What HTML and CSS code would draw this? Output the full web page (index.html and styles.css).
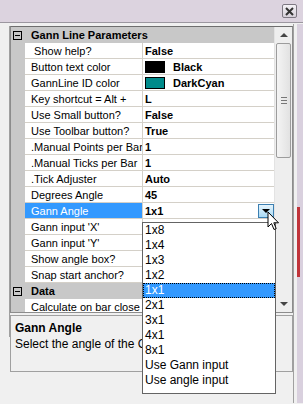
FILE: index.html
```html
<!DOCTYPE html>
<html lang="en">

<head>
    <meta charset="UTF-8">
    <title>Gann Line Parameters</title>
    <link rel="stylesheet" href="styles.css">
</head>

<body>

    <div class="titlebar">
        <div class="close-btn">
            <svg width="9" height="9" viewBox="0 0 9 9"><path d="M1 1 L8 8 M8 1 L1 8" stroke="#333" stroke-width="2"/></svg>
        </div>
    </div>

    <div class="main">
        <div class="left-edge"></div>

        <div class="panel">
            <div class="grid">
                <div class="rows">
                    <div class="category">
                        <span class="toggle"></span>
                        <span class="cat-name">Gann Line Parameters</span>
                    </div>
                    <div class="row"><span class="gutter"></span><span class="name">&nbsp;Show help?</span><span class="value">False</span></div>
                    <div class="row"><span class="gutter"></span><span class="name">Button text color</span><span class="value"><i class="swatch black"></i>Black</span></div>
                    <div class="row"><span class="gutter"></span><span class="name">GannLine ID color</span><span class="value"><i class="swatch cyan"></i>DarkCyan</span></div>
                    <div class="row"><span class="gutter"></span><span class="name">Key shortcut = Alt +</span><span class="value">L</span></div>
                    <div class="row"><span class="gutter"></span><span class="name">Use Small button?</span><span class="value">False</span></div>
                    <div class="row"><span class="gutter"></span><span class="name">Use Toolbar button?</span><span class="value">True</span></div>
                    <div class="row"><span class="gutter"></span><span class="name">.Manual Points per Bar</span><span class="value">1</span></div>
                    <div class="row"><span class="gutter"></span><span class="name">.Manual Ticks per Bar</span><span class="value">1</span></div>
                    <div class="row"><span class="gutter"></span><span class="name">.Tick Adjuster</span><span class="value">Auto</span></div>
                    <div class="row"><span class="gutter"></span><span class="name">Degrees Angle</span><span class="value">45</span></div>
                    <div class="row selected"><span class="gutter"></span><span class="name">Gann Angle</span><span class="value">1x1<span class="drop-btn"></span></span></div>
                    <!-- values of the next rows sit under the open list -->
                    <div class="row"><span class="gutter"></span><span class="name">Gann input 'X'</span><span class="value"></span></div>
                    <div class="row"><span class="gutter"></span><span class="name">Gann input 'Y'</span><span class="value"></span></div>
                    <div class="row"><span class="gutter"></span><span class="name">Show angle box?</span><span class="value"></span></div>
                    <div class="row"><span class="gutter"></span><span class="name">Snap start anchor?</span><span class="value"></span></div>
                    <div class="category">
                        <span class="toggle"></span>
                        <span class="cat-name">Data</span>
                    </div>
                    <div class="row"><span class="gutter"></span><span class="name">Calculate on bar close</span><span class="value"></span></div>
                </div>
                <div class="scrollbar">
                    <div class="sb-btn"><span class="arrow-up"></span></div>
                    <div class="sb-thumb"><span class="grip"></span></div>
                    <div class="sb-track"></div>
                    <div class="sb-btn"><span class="arrow-down"></span></div>
                </div>
            </div>

            <div class="desc">
                <div class="desc-title">Gann Angle</div>
                <div class="desc-text">Select the angle of the Ga</div>
            </div>
        </div>

        <div class="right-edge">
            <div class="red-stripe"></div>
        </div>
    </div>

    <!-- open dropdown of the Gann Angle editor -->
    <ul class="dropdown">
        <li>1x8</li>
        <li>1x4</li>
        <li>1x3</li>
        <li>1x2</li>
        <li class="active">1x1</li>
        <li>2x1</li>
        <li>3x1</li>
        <li>4x1</li>
        <li>8x1</li>
        <li>Use Gann input</li>
        <li>Use angle input</li>
    </ul>

    <svg class="cursor" width="13" height="20" viewBox="0 0 13 20">
        <path d="M1 1 L1 16 L4.5 12.5 L7 18.5 L9.2 17.6 L6.8 11.8 L11.5 11.8 Z" fill="#fff" stroke="#000" stroke-width="1"/>
    </svg>

</body>

</html>
```

FILE: styles.css
```css
/* General Styles */

body {
    font-family: "Liberation Sans", Arial, sans-serif;
    font-size: 11px;
    margin: 0;
    padding: 0;
    width: 303px;
    height: 404px;
    overflow: hidden;
    background-color: #f0f0f0;
    color: #000;
    position: relative;
}

.titlebar {
    height: 23px;
    background-color: #dcd3df;
    border-bottom: 1px solid #9c97a0;
    display: flex;
    justify-content: flex-end;
    align-items: flex-start;
    padding: 4px 6px 0 0;
    box-sizing: border-box;
}

.close-btn {
    width: 13px;
    height: 12px;
    border: 1px solid #7d7882;
    border-radius: 2px;
    background: linear-gradient(#f4f2f6, #d6d0da);
    display: flex;
    align-items: center;
    justify-content: center;
}

.main {
    display: flex;
    height: 380px;
}

.left-edge {
    width: 9px;
    border-right: 1px solid #a0a0a0;
    margin-top: 3px;
    height: 311px;
}

.panel {
    width: 283px;
    padding-top: 3px;
    display: flex;
    flex-direction: column;
}

.grid {
    height: 285px;
    border: 1px solid #8c8c8c;
    border-top-color: #6e6e6e;
    display: flex;
    background-color: #fff;
    overflow: hidden;
}

.rows {
    width: 264px;
    overflow: hidden;
}

.category {
    height: 16px;
    display: flex;
    align-items: center;
    background-color: #c8c8c8;
    font-weight: bold;
}

.toggle {
    width: 7px;
    height: 7px;
    border: 1px solid #000;
    margin: 0 9px 0 2px;
    position: relative;
    background-color: #c8c8c8;
}

.toggle::after {
    content: "";
    position: absolute;
    left: 1px;
    top: 3px;
    width: 5px;
    height: 1px;
    background-color: #000;
}

.cat-name {
    white-space: nowrap;
}

.row {
    display: grid;
    grid-template-columns: 14px 118px 1fr;
    height: 16px;
}

.row .gutter {
    background-color: #c8c8c8;
}

.row .name,
.row .value {
    border-bottom: 1px solid #d4d0c8;
    display: flex;
    align-items: center;
    white-space: nowrap;
    overflow: hidden;
}

.row .name {
    padding-left: 6px;
    border-right: 1px solid #d4d0c8;
}

.row .value {
    padding-left: 2px;
    font-weight: bold;
    position: relative;
}

.row.selected .name {
    background-color: #3399ff;
    color: #fff;
}

.swatch {
    width: 18px;
    height: 10px;
    border: 1px solid #000;
    margin-right: 8px;
}

.swatch.black {
    background-color: #000;
}

.swatch.cyan {
    background-color: #008b8b;
}

.drop-btn {
    position: absolute;
    right: 0;
    top: 1px;
    width: 14px;
    height: 12px;
    border: 1px solid #3c7fb1;
    background: linear-gradient(#e5f4fc, #a9daf5);
}

.drop-btn::after {
    content: "";
    position: absolute;
    left: 3px;
    top: 4px;
    border-left: 4px solid transparent;
    border-right: 4px solid transparent;
    border-top: 4px solid #000;
}

/* Scrollbar */

.scrollbar {
    width: 17px;
    display: flex;
    flex-direction: column;
    background-color: #eeeeee;
    border-left: 1px solid #e3e3e3;
}

.sb-btn {
    height: 16px;
    display: flex;
    align-items: center;
    justify-content: center;
}

.arrow-up {
    border-left: 4px solid transparent;
    border-right: 4px solid transparent;
    border-bottom: 4px solid #444;
}

.arrow-down {
    border-left: 4px solid transparent;
    border-right: 4px solid transparent;
    border-top: 4px solid #444;
}

.sb-thumb {
    height: 113px;
    margin: 0 1px;
    border: 1px solid #9c9c9c;
    border-radius: 2px;
    background: linear-gradient(90deg, #f4f4f4, #e2e2e2);
    display: flex;
    align-items: center;
    justify-content: center;
}

.grip {
    width: 6px;
    height: 5px;
    border-top: 1px solid #777;
    border-bottom: 1px solid #777;
    position: relative;
}

.grip::after {
    content: "";
    position: absolute;
    left: 0;
    top: 2px;
    width: 6px;
    height: 1px;
    background-color: #777;
}

.sb-track {
    flex: 1;
}

/* Description */

.desc {
    margin-top: 2px;
    height: 57px;
    border: 1px solid #a0a0a0;
    padding: 5px 4px 0 4px;
    box-sizing: border-box;
    overflow: hidden;
    white-space: nowrap;
}

.desc-title {
    font-weight: bold;
    font-size: 12px;
    height: 16px;
}

.desc-text {
    font-size: 12px;
    width: 127px;
    overflow: hidden;
}

.right-edge {
    flex: 1;
    border-left: 1px solid #a0a0a0;
    margin-top: 1px;
    padding-left: 3px;
    background: linear-gradient(90deg, #f0f0f0 3px, #d9d0de 3px);
}

.red-stripe {
    width: 3px;
    height: 70px;
    margin-top: 183px;
    background-color: #c0343a;
}

/* Dropdown list */

.dropdown {
    position: absolute;
    left: 142px;
    top: 222px;
    width: 132px;
    margin: 0;
    padding: 0 0 5px 0;
    list-style: none;
    background-color: #fff;
    border: 1px solid #646464;
    font-size: 12px;
}

.dropdown li {
    height: 15px;
    line-height: 15px;
    padding-left: 2px;
    white-space: nowrap;
}

.dropdown li.active {
    background-color: #3399ff;
    color: #fff;
    outline: 1px dotted #000;
    outline-offset: -1px;
}

.cursor {
    position: absolute;
    left: 267px;
    top: 211px;
}
```
